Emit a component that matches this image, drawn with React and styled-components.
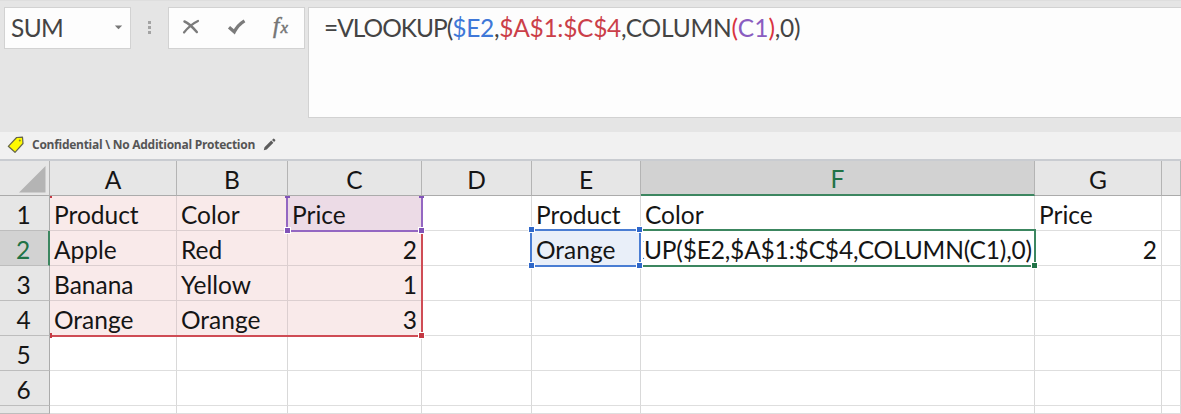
import React from "react";
import styled, { createGlobalStyle, css } from "styled-components";

const GlobalStyle = createGlobalStyle`
  * { box-sizing: border-box; }
  body { margin: 0; overflow: hidden; background: #fff; }
`;

const Window = styled.main`
  width: 1181px;
  height: 414px;
  overflow: hidden;
  display: flex;
  flex-direction: column;
  background: #fff;
  color: #151515;
  font-family: Lato, "Liberation Sans", sans-serif;
  font-size: 24.5px;
`;

const FormulaBar = styled.header`
  display: flex;
  align-items: flex-start;
  height: 132px;
  padding: 6px 0 0 4px;
  background: #e5e5e5;
  border-top: 1px solid #dedede;
`;

const Box = styled.div`
  display: flex;
  align-items: center;
  height: 42px;
  background: #fdfdfd;
  border: 1px solid #d2d2d2;
`;

const NameBox = styled(Box)`
  width: 127px;
  padding: 0 7px 2px 6px;
  justify-content: space-between;
  color: #444;
  letter-spacing: -0.6px;
`;

const Grip = styled.div`
  display: flex;
  flex-direction: column;
  gap: 2px;
  margin: 14px 17px 0;
`;

const Dot = styled.i`
  width: 3px;
  height: 3px;
  background: #a3a3a3;
`;

const Tools = styled(Box)`
  width: 137px;
  padding: 0 13px 2px 13px;
  justify-content: space-between;
`;

const FormulaInput = styled(Box)`
  flex: 1;
  height: 111px;
  margin-left: 3px;
  padding: 5px 0 0 15px;
  align-items: flex-start;
  border-right: 0;
  color: #444;
  line-height: 30px;
  letter-spacing: -0.2px;
  white-space: pre;
`;

const Ref = styled.span`
  color: ${(p) => p.$color};
  letter-spacing: ${(p) => p.$tight || "-0.3px"};
`;

const LabelBar = styled.div`
  display: flex;
  align-items: center;
  height: 29px;
  padding: 0 0 2px 7px;
  background: #f1f1f1;
  border-bottom: 2px solid #c9ccd1;
`;

const LabelText = styled.span`
  margin: 0 8px 0 8px;
  color: #555;
  font: 700 12px/16px "Open Sans", "Noto Sans", sans-serif;
  letter-spacing: -0.27px;
  white-space: nowrap;
`;

const Sheet = styled.div`
  display: grid;
  grid-template-columns: 50px 127px 111px 134px 110px 109px 394px 127px 19px;
  grid-template-rows: 35px repeat(6, 35px) 8px;
`;

const at = css`
  grid-row: ${(p) => p.$row};
  grid-column: ${(p) => p.$col};
`;

const Header = styled.div`
  ${at}
  display: flex;
  align-items: center;
  justify-content: center;
  background: ${(p) => (p.$active ? "#d2d2d2" : "#e6e6e6")};
  color: ${(p) => (p.$active ? "#217346" : "#151515")};
`;

const ColumnHeader = styled(Header)`
  padding-top: 2px;
  border-right: 1px solid #b4b4b4;
  border-bottom: ${(p) => (p.$active ? "2px solid #3c8660" : "1px solid #ababab")};
`;

const RowHeader = styled(Header)`
  padding-top: 2px;
  padding-right: 2px;
  border-bottom: 1px solid #bdbdbd;
  border-right: ${(p) => (p.$active ? "2px solid #3c8660" : "1px solid #ababab")};
`;

const Corner = styled(Header)`
  justify-content: flex-end;
  padding: 3px 3px 0 0;
  border-right: 1px solid #b4b4b4;
  border-bottom: 1px solid #ababab;
`;

const Cell = styled.div`
  ${at}
  display: flex;
  align-items: center;
  justify-content: ${(p) => (p.$right ? "flex-end" : "flex-start")};
  min-width: 0;
  padding: 2px 4px 0;
  overflow: hidden;
  white-space: nowrap;
  background: ${(p) => p.$fill || "#fff"};
  border-right: 1px solid ${(p) => (p.$shaded ? "#dccfd0" : "#d9d9d9")};
  border-bottom: 1px solid ${(p) => (p.$shaded ? "#dccfd0" : "#dedede")};
`;

const CellEditor = styled.div`
  display: flex;
  justify-content: flex-end;
  width: 389px;
  margin-right: -2px;
  flex: none;
  overflow: hidden;
  letter-spacing: -0.17px;
`;

const Outline = styled.div`
  ${at}
  position: relative;
  z-index: 1;
  margin: ${(p) => p.$margin};
  border: 2px solid ${(p) => p.$color};
  border-top-width: ${(p) => (p.$top ? "2px" : "0")};
  border-left-width: ${(p) => (p.$left ? "2px" : "0")};
`;

const Handle = styled.i`
  position: absolute;
  width: 7px;
  height: 7px;
  border: 1px solid #fff;
  background: ${(p) => p.$color};
  ${(p) => (p.$v === "top" ? "top: -5px;" : "bottom: -4px;")}
  ${(p) => (p.$h === "left" ? "left: -4px;" : "right: -4px;")}
`;

/* Handles at the sheet's edge are cut by the row and column headers. */
const EdgeHandle = styled.i`
  position: absolute;
  width: ${(p) => p.$w}px;
  height: ${(p) => p.$hgt}px;
  background: ${(p) => p.$color};
  ${(p) => (p.$v === "top" ? "top: 0;" : "bottom: -3px;")}
  ${(p) => (p.$h === "left" ? `left: ${p.$x || 0}px;` : "right: -3px;")}
`;

const RED = "#cf4c55";
const PURPLE = "#9467c2";
const BLUE = "#4a7dd3";
const GREEN = "#3c8660";

const letters = ["A", "B", "C", "D", "E", "F", "G", ""];
const rows = [
  ["Product", "Color", "Price", "", "Product", "Color", "Price", ""],
  ["Apple", "Red", "2", "", "Orange", "KUP($E2,$A$1:$C$4,COLUMN(C1),0)", "2", ""],
  ["Banana", "Yellow", "1", "", "", "", "", ""],
  ["Orange", "Orange", "3", "", "", "", "", ""],
  ["", "", "", "", "", "", "", ""],
  ["", "", "", "", "", "", "", ""],
  ["", "", "", "", "", "", "", ""],
];

function fillFor(r, c) {
  if (r === 0 && c === 2) return "#ecdbe6";
  if (r === 1 && c === 4) return "#e9eff9";
  if (r < 4 && c < 3) return "#f9eaea";
  return "#fff";
}

function CancelIcon() {
  return (
    <svg width="18" height="18" viewBox="0 0 18 18" fill="none" stroke="#7b7b7b">
      <path d="M2.500 3.500C6.500 5 10.500 9 14.800 14" strokeWidth="2.500" strokeLinecap="round" />
      <path d="M16 3C10.500 5.500 6 9.500 2 14.500" strokeWidth="2.200" strokeLinecap="round" />
    </svg>
  );
}

function EnterIcon() {
  return (
    <svg width="19" height="18" viewBox="0 0 19 18" fill="none" stroke="#7b7b7b">
      <path d="M2 9.300L7.300 13.800C9.500 9.500 13 5.500 17.500 2.800" strokeWidth="3.300" />
    </svg>
  );
}

const FxText = styled.span`
  width: 18px;
  color: #757575;
  font: italic 400 23px/24px "Liberation Serif", serif;
  letter-spacing: 0;
  -webkit-text-stroke: 0.5px #757575;
  white-space: nowrap;
  small { font-size: 17px; margin-left: 1px; }
`;

function TagIcon() {
  return (
    <svg width="17" height="18" viewBox="0 0 17 18">
      <path d="M9.600 1.500L15.500 1.200L16 7.500L8 16.300L1.300 10.300Z" fill="#fffa00" stroke="#66664a" strokeWidth="1.200" strokeLinejoin="round" />
      <circle cx="12.800" cy="4.400" r="1" fill="#8a8a20" />
    </svg>
  );
}

function PencilIcon() {
  return (
    <svg width="13" height="13" viewBox="0 0 13 13" fill="#5c5c5c">
      <path d="M0.800 12.200L1.500 9.300L8.200 2.600L10.400 4.800L3.700 11.500ZM9 1.900L10.300 0.800Q10.800 0.400 11.400 0.900L12.200 1.700Q12.600 2.300 12.200 2.800L11.100 4Z" />
    </svg>
  );
}

export default function App() {
  return (
    <Window>
      <GlobalStyle />
      <FormulaBar>
        <NameBox>
          SUM
          <svg width="9" height="5" viewBox="0 0 9 5"><path d="M0.800 0.500H8.200L4.500 4.200Z" fill="#777" /></svg>
        </NameBox>
        <Grip><Dot /><Dot /><Dot /></Grip>
        <Tools>
          <CancelIcon />
          <EnterIcon />
          <FxText>f<small>x</small></FxText>
        </Tools>
        <FormulaInput>
          <span>
            <Ref $tight="-1px">=VLOOKUP(</Ref><Ref $color="#3f78d8">$E2</Ref>,<Ref $color="#cb3f49">$A$1:$C$4</Ref>,COLUMN
            <Ref $color="#d9343f">(</Ref><Ref $color="#8a5cc0" $tight="0">C1</Ref><Ref $color="#d9343f">)</Ref>,0)
          </span>
        </FormulaInput>
      </FormulaBar>
      <LabelBar>
        <TagIcon />
        <LabelText>Confidential \ No Additional Protection</LabelText>
        <PencilIcon />
      </LabelBar>
      <Sheet>
        <Corner $row={1} $col={1}>
          <svg width="27" height="27" viewBox="0 0 27 27"><path d="M26.500 0V26.500H0Z" fill="#b4b4b4" /></svg>
        </Corner>
        {letters.map((l, c) => (
          <ColumnHeader key={c} $row={1} $col={c + 2} $active={l === "F"}>{l}</ColumnHeader>
        ))}
        {rows.map((cells, r) => (
          <React.Fragment key={r}>
            <RowHeader $row={r + 2} $col={1} $active={r === 1}>{r < 6 ? r + 1 : ""}</RowHeader>
            {cells.map((text, c) => (
              <Cell
                key={c}
                $row={r + 2}
                $col={c + 2}
                $fill={fillFor(r, c)}
                $shaded={r < 4 && c < 3}
                $right={/^\d/.test(text) || (r === 1 && c === 5)}
              >
                {r === 1 && c === 5 ? <CellEditor>{text}</CellEditor> : text}
              </Cell>
            ))}
          </React.Fragment>
        ))}
        <Outline $row="2 / 6" $col="2 / 5" $color={RED} $margin="0 -1px -1px 0">
          <EdgeHandle $color="#c43943" $v="top" $h="left" $w={2} $hgt={2} />
          <EdgeHandle $color="#c43943" $v="bottom" $h="left" $w={2} $hgt={5} />
          <Handle $color="#c43943" $v="bottom" $h="right" />
        </Outline>
        <Outline $row="2" $col="4" $color={PURPLE} $left $margin="0 -1px -1px -2px">
          <EdgeHandle $color="#8153b8" $v="top" $h="left" $x={-3} $w={5} $hgt={2} />
          <EdgeHandle $color="#8153b8" $v="top" $h="right" $w={5} $hgt={2} />
          <Handle $color="#8153b8" $v="bottom" $h="left" />
          <Handle $color="#8153b8" $v="bottom" $h="right" />
        </Outline>
        <Outline $row="3" $col="7" $color={GREEN} $left $top $margin="-2px -1px -1px -2px">
          <Handle $color="#217346" $v="bottom" $h="right" />
        </Outline>
        <Outline $row="3" $col="6" $color={BLUE} $left $top $margin="-2px 0 -1px -2px">
          <Handle $color="#2f67c9" $v="top" $h="left" />
          <Handle $color="#2f67c9" $v="top" $h="right" />
          <Handle $color="#2f67c9" $v="bottom" $h="left" />
          <Handle $color="#2f67c9" $v="bottom" $h="right" />
        </Outline>
      </Sheet>
    </Window>
  );
}
